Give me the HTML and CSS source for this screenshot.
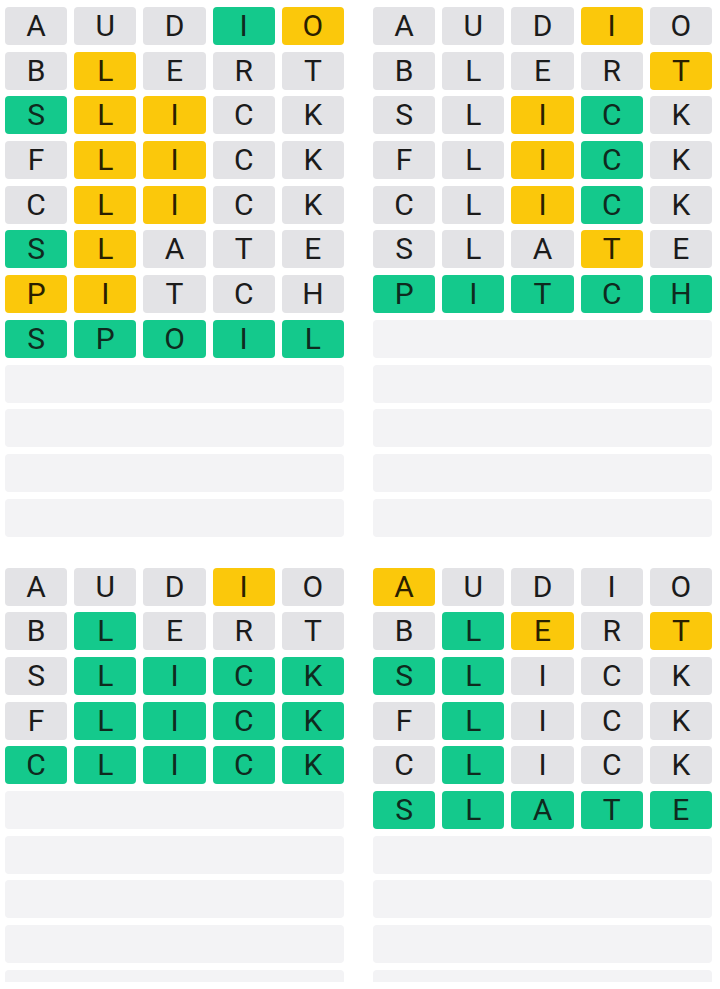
FILE: index.html
```html
<!DOCTYPE html>
<html lang="en">
<head>
	<meta charset="UTF-8">
	<title>Quordle</title>
	<link rel="stylesheet" href="styles.css">
</head>
<body>
<div class="game">

	<!-- board 1 : SPOIL -->
	<div class="board">
		<div class="row"><span class="tile">A</span><span class="tile">U</span><span class="tile">D</span><span class="tile hit">I</span><span class="tile near">O</span></div>
		<div class="row"><span class="tile">B</span><span class="tile near">L</span><span class="tile">E</span><span class="tile">R</span><span class="tile">T</span></div>
		<div class="row"><span class="tile hit">S</span><span class="tile near">L</span><span class="tile near">I</span><span class="tile">C</span><span class="tile">K</span></div>
		<div class="row"><span class="tile">F</span><span class="tile near">L</span><span class="tile near">I</span><span class="tile">C</span><span class="tile">K</span></div>
		<div class="row"><span class="tile">C</span><span class="tile near">L</span><span class="tile near">I</span><span class="tile">C</span><span class="tile">K</span></div>
		<div class="row"><span class="tile hit">S</span><span class="tile near">L</span><span class="tile">A</span><span class="tile">T</span><span class="tile">E</span></div>
		<div class="row"><span class="tile near">P</span><span class="tile near">I</span><span class="tile">T</span><span class="tile">C</span><span class="tile">H</span></div>
		<div class="row"><span class="tile hit">S</span><span class="tile hit">P</span><span class="tile hit">O</span><span class="tile hit">I</span><span class="tile hit">L</span></div>
		<div class="row blank"></div>
		<div class="row blank"></div>
		<div class="row blank"></div>
		<div class="row blank"></div>
	</div>

	<!-- board 2 : PITCH -->
	<div class="board">
		<div class="row"><span class="tile">A</span><span class="tile">U</span><span class="tile">D</span><span class="tile near">I</span><span class="tile">O</span></div>
		<div class="row"><span class="tile">B</span><span class="tile">L</span><span class="tile">E</span><span class="tile">R</span><span class="tile near">T</span></div>
		<div class="row"><span class="tile">S</span><span class="tile">L</span><span class="tile near">I</span><span class="tile hit">C</span><span class="tile">K</span></div>
		<div class="row"><span class="tile">F</span><span class="tile">L</span><span class="tile near">I</span><span class="tile hit">C</span><span class="tile">K</span></div>
		<div class="row"><span class="tile">C</span><span class="tile">L</span><span class="tile near">I</span><span class="tile hit">C</span><span class="tile">K</span></div>
		<div class="row"><span class="tile">S</span><span class="tile">L</span><span class="tile">A</span><span class="tile near">T</span><span class="tile">E</span></div>
		<div class="row"><span class="tile hit">P</span><span class="tile hit">I</span><span class="tile hit">T</span><span class="tile hit">C</span><span class="tile hit">H</span></div>
		<div class="row blank"></div>
		<div class="row blank"></div>
		<div class="row blank"></div>
		<div class="row blank"></div>
		<div class="row blank"></div>
	</div>

	<!-- board 3 : CLICK -->
	<div class="board">
		<div class="row"><span class="tile">A</span><span class="tile">U</span><span class="tile">D</span><span class="tile near">I</span><span class="tile">O</span></div>
		<div class="row"><span class="tile">B</span><span class="tile hit">L</span><span class="tile">E</span><span class="tile">R</span><span class="tile">T</span></div>
		<div class="row"><span class="tile">S</span><span class="tile hit">L</span><span class="tile hit">I</span><span class="tile hit">C</span><span class="tile hit">K</span></div>
		<div class="row"><span class="tile">F</span><span class="tile hit">L</span><span class="tile hit">I</span><span class="tile hit">C</span><span class="tile hit">K</span></div>
		<div class="row"><span class="tile hit">C</span><span class="tile hit">L</span><span class="tile hit">I</span><span class="tile hit">C</span><span class="tile hit">K</span></div>
		<div class="row blank"></div>
		<div class="row blank"></div>
		<div class="row blank"></div>
		<div class="row blank"></div>
		<div class="row blank"></div>
		<div class="row blank"></div>
		<div class="row blank"></div>
	</div>

	<!-- board 4 : SLATE -->
	<div class="board">
		<div class="row"><span class="tile near">A</span><span class="tile">U</span><span class="tile">D</span><span class="tile">I</span><span class="tile">O</span></div>
		<div class="row"><span class="tile">B</span><span class="tile hit">L</span><span class="tile near">E</span><span class="tile">R</span><span class="tile near">T</span></div>
		<div class="row"><span class="tile hit">S</span><span class="tile hit">L</span><span class="tile">I</span><span class="tile">C</span><span class="tile">K</span></div>
		<div class="row"><span class="tile">F</span><span class="tile hit">L</span><span class="tile">I</span><span class="tile">C</span><span class="tile">K</span></div>
		<div class="row"><span class="tile">C</span><span class="tile hit">L</span><span class="tile">I</span><span class="tile">C</span><span class="tile">K</span></div>
		<div class="row"><span class="tile hit">S</span><span class="tile hit">L</span><span class="tile hit">A</span><span class="tile hit">T</span><span class="tile hit">E</span></div>
		<div class="row blank"></div>
		<div class="row blank"></div>
		<div class="row blank"></div>
		<div class="row blank"></div>
		<div class="row blank"></div>
		<div class="row blank"></div>
	</div>

</div>
</body>
</html>
```

FILE: styles.css
```css
body {margin:0; padding:0; background:#fff; color:#1b1b1b; font-family:Roboto, "Liberation Sans", Arial, sans-serif;}

/* four boards, two per line, cut off at the bottom like a scrolled view */
.game {display:grid; grid-template-columns:339px 339px; column-gap:29px; row-gap:31px; align-content:start; padding:7px 0 0 5px; height:982px; box-sizing:border-box; overflow:hidden;}

.board {display:flex; flex-direction:column; gap:6.7px;}

.row {display:grid; grid-template-columns:repeat(5, 1fr); column-gap:7px; height:38px; flex:none;}
.row.blank {background:#f3f3f5; border-radius:4px;}

.tile {display:flex; align-items:center; justify-content:center; background:#e3e3e6; border-radius:4px; font-size:30px; font-weight:400; line-height:1;}
.tile.hit {background:#14c98c; color:#0f2a1e;}
.tile.near {background:#fbc80b; color:#2a1f00;}
```
